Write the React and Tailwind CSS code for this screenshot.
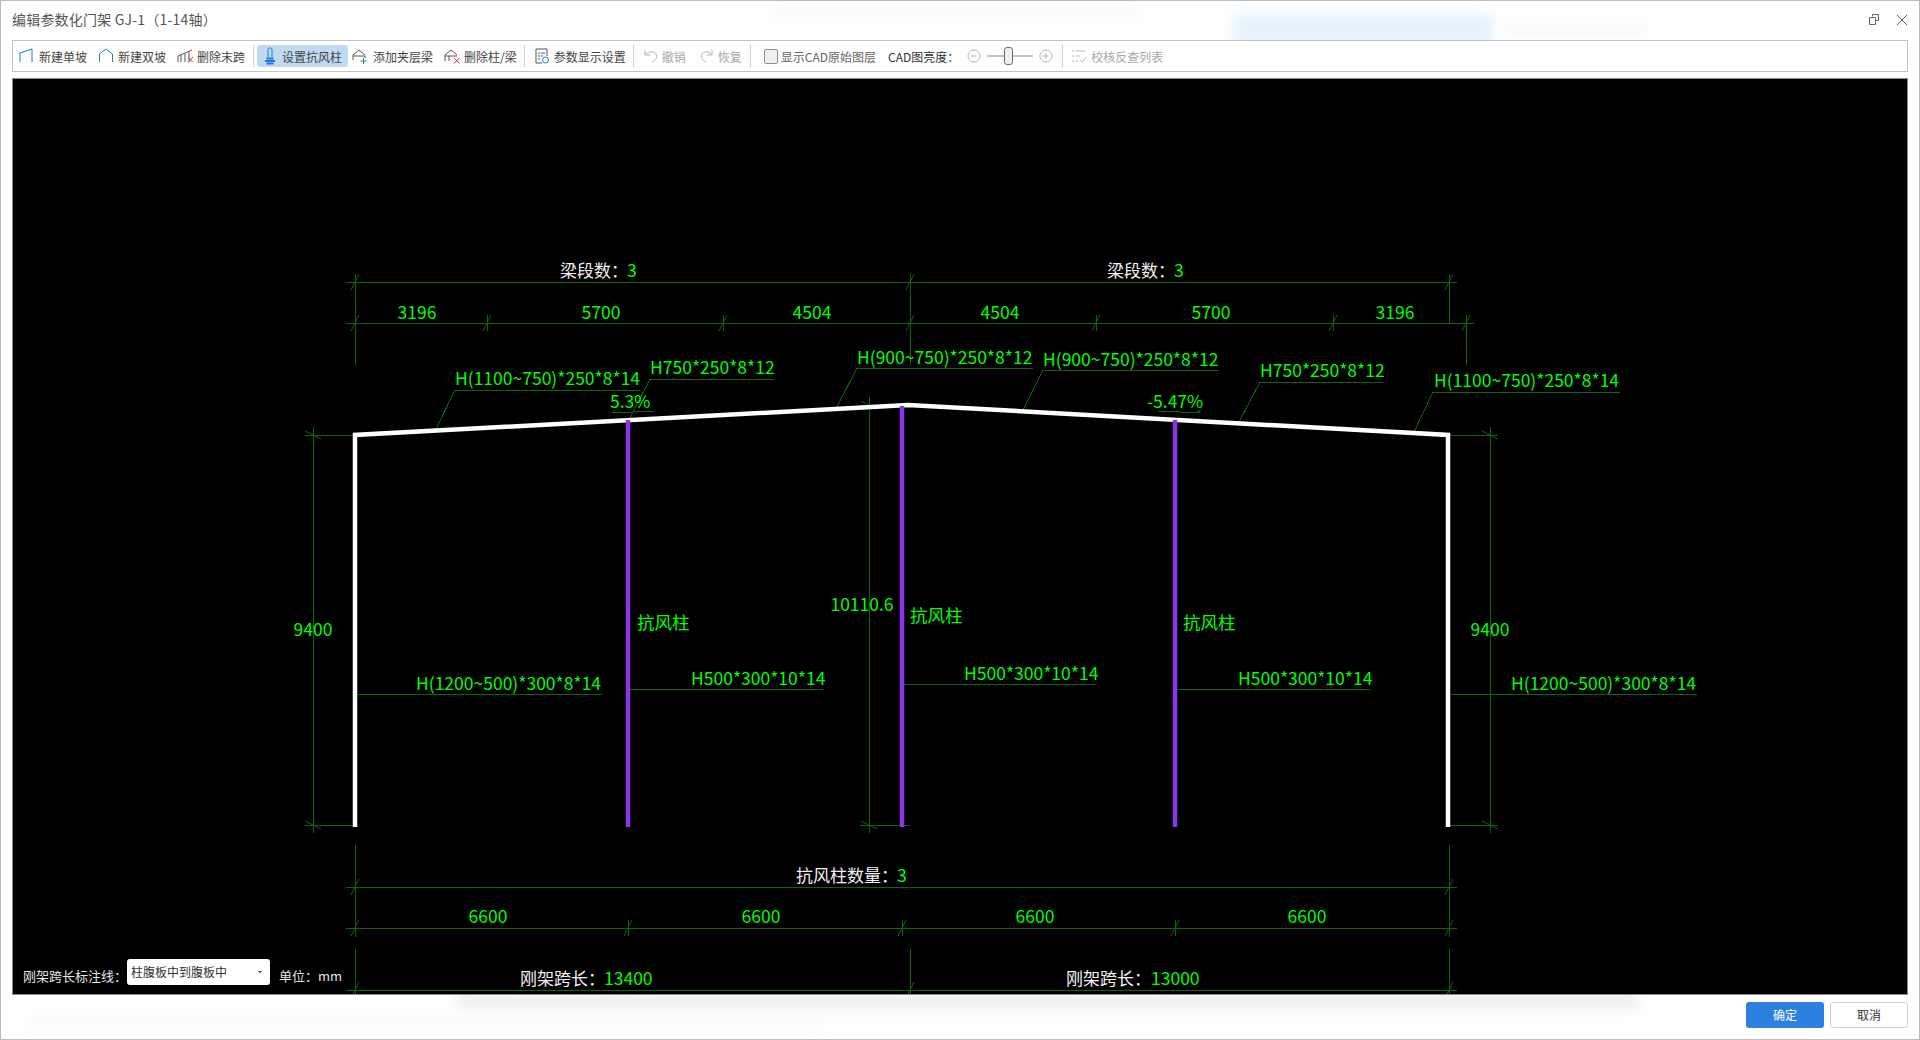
import React from "react";
import { ChevronDown } from "lucide-react";

const DIM = "#0b660b";
const GREEN = "#00ff00";

// 标注线
const dimLines = [
  // 顶部梁段
  [346, 282, 1457, 282], [346, 323, 1474, 323],
  [355, 274, 355, 365], [910, 274, 910, 365], [1449, 274, 1449, 323], [1466, 315, 1466, 365],
  // 左右高度
  [305, 435, 355, 435], [313, 427, 313, 833], [305, 825, 355, 825],
  [1450, 435, 1498, 435], [1490, 427, 1490, 833], [1450, 825, 1498, 825],
  // 中柱高度
  [860, 405, 905, 405], [869, 397, 869, 833], [860, 825, 910, 825],
  // 底部
  [355, 845, 355, 937], [1449, 845, 1449, 937], [346, 887, 1457, 887], [346, 928, 1457, 928],
  [355, 949, 355, 995], [910, 949, 910, 995], [1449, 949, 1449, 995], [346, 990, 1457, 990],
  // 引出线
  [455, 390, 641, 390], [455, 390, 436, 429],
  [650, 379, 774, 379], [650, 379, 630, 418],
  [857, 368, 1033, 368], [857, 368, 837, 407],
  [1043, 370, 1219, 370], [1043, 370, 1023, 410],
  [1260, 382, 1383, 382], [1260, 382, 1239, 422],
  [1433, 392, 1620, 392], [1433, 392, 1414, 432],
  [355, 694, 602, 694], [630, 689, 823, 689], [903, 684, 1097, 684], [1177, 689, 1370, 689], [1451, 694, 1697, 694],
  // 坡度箭头
  [612, 413, 654, 411], [612, 413, 615, 410], [1158, 411, 1201, 413], [1201, 413, 1197, 410],
];

// 斜杠
const slashTicks = [
  [355, 282], [910, 282], [1449, 282],
  [355, 323], [487, 323], [723, 323], [910, 323], [1096, 323], [1333, 323], [1466, 323],
  [355, 887], [1449, 887],
  [355, 928], [628, 928], [902, 928], [1175, 928], [1449, 928],
  [355, 990], [910, 990], [1449, 990],
];

// 反斜杠
const backTicks = [[313, 435], [313, 825], [1490, 435], [1490, 825], [869, 405], [869, 825]];

const texts = [
  ["3196", 417, 319, "middle"], ["5700", 601, 319, "middle"], ["4504", 812, 319, "middle"],
  ["4504", 1000, 319, "middle"], ["5700", 1211, 319, "middle"], ["3196", 1395, 319, "middle"],
  ["3", 627, 277], ["3", 1174, 277], ["3", 897, 882],
  ["H(1100~750)*250*8*14", 455, 385], ["H750*250*8*12", 650, 374],
  ["5.3%", 610, 408], ["H(900~750)*250*8*12", 857, 364], ["H(900~750)*250*8*12", 1043, 366],
  ["H750*250*8*12", 1260, 377], ["-5.47%", 1147, 408], ["H(1100~750)*250*8*14", 1434, 387],
  ["9400", 313, 636, "middle"], ["9400", 1490, 636, "middle"], ["10110.6", 862, 611, "middle"],
  ["抗风柱", 637, 629], ["抗风柱", 910, 622], ["抗风柱", 1183, 629],
  ["H(1200~500)*300*8*14", 416, 690], ["H500*300*10*14", 691, 685], ["H500*300*10*14", 964, 680],
  ["H500*300*10*14", 1238, 685], ["H(1200~500)*300*8*14", 1511, 690],
  ["6600", 488, 923, "middle"], ["6600", 761, 923, "middle"], ["6600", 1035, 923, "middle"], ["6600", 1307, 923, "middle"],
  ["13400", 604, 985], ["13000", 1151, 985],
];

const whiteTexts = [
  ["梁段数：", 560, 277], ["梁段数：", 1107, 277], ["抗风柱数量：", 796, 882],
  ["刚架跨长：", 520, 985], ["刚架跨长：", 1066, 985],
];

function Drawing() {
  return (
    <svg viewBox="13 79 1894 915" className="block w-full h-full" style={{ fontFamily: '"Noto Sans CJK SC", sans-serif' }}>
      <g stroke={DIM} strokeWidth="1" shapeRendering="crispEdges">
        {dimLines.map((l, i) => (
          <line key={i} x1={l[0]} y1={l[1]} x2={l[2]} y2={l[3]} />
        ))}
        {slashTicks.map((t, i) => (
          <line key={i} x1={t[0]} y1={t[1] - 8} x2={t[0]} y2={t[1] + 8} />
        ))}
      </g>
      <g stroke={DIM} strokeWidth="1">
        {slashTicks.map((t, i) => (
          <line key={i} x1={t[0] - 4} y1={t[1] + 8} x2={t[0] + 4} y2={t[1] - 8} />
        ))}
        {backTicks.map((t, i) => (
          <line key={i} x1={t[0] - 8} y1={t[1] - 4} x2={t[0] + 8} y2={t[1] + 4} />
        ))}
      </g>
      <path d="M355 827V435L908 405L1448 435V827" fill="none" stroke="#fff" strokeWidth="4.500" strokeLinejoin="miter" />
      <g stroke="#8a36e6" strokeWidth="4.500">
        <line x1="628" y1="420" x2="628" y2="827" />
        <line x1="902" y1="406" x2="902" y2="827" />
        <line x1="1175" y1="420" x2="1175" y2="827" />
      </g>
      <g fill={GREEN} fontSize="17.5">
        {texts.map((t, i) => (
          <text key={i} x={t[1]} y={t[2]} textAnchor={t[3] || "start"}>{t[0]}</text>
        ))}
      </g>
      <g fill="#f2f2f2" fontSize="17">
        {whiteTexts.map((t, i) => (
          <text key={i} x={t[1]} y={t[2]}>{t[0]}</text>
        ))}
      </g>
    </svg>
  );
}

// 工具栏图标
function Icon({ w = 16, children }) {
  return (
    <svg width={w} height="18" viewBox={`0 0 ${w} 18`} fill="none" strokeWidth="1" className="shrink-0">
      {children}
    </svg>
  );
}

const BLUE = "#1b78dc";
const RED = "#e5383d";
const GRAY = "#555";
const OFF = "#b5b5b5";

function Item({ icon, label, disabled, gap = "gap-[6px]" }) {
  return (
    <div className={`flex items-center h-[22px] ${gap} ${disabled ? "text-[#a8a8a8]" : "text-[#444]"}`}>
      {icon}
      <span className="pt-[2px]">{label}</span>
    </div>
  );
}

function Sep() {
  return <div className="w-px h-[22px] bg-[#d4d4d4] shrink-0" />;
}

function Toolbar() {
  return (
    <div className="h-[32px] flex items-center border border-[#c4c4c4] bg-white pl-[6px] text-[12px] whitespace-nowrap">
      <Item label="新建单坡" icon={<Icon w={14}><path d="M1 15V6L13 2V15" stroke={BLUE} /></Icon>} />
      <div className="w-[11px]" />
      <Item gap="gap-[4px]" label="新建双坡" icon={<Icon w={16}><path d="M1.500 15V7L8 2L14.500 7V15" stroke={BLUE} /></Icon>} />
      <div className="w-[11px]" />
      <Item gap="gap-[3px]" label="删除末跨" icon={<Icon w={17}>
        <path d="M1 15V9L15 3M4 15V8M8 15V6.500M12 15V5" stroke={GRAY} />
        <path d="M11 10L16 15.500M16 10L11 15.500" stroke={RED} />
      </Icon>} />
      <div className="w-[8px]" />
      <Sep />
      <div className="w-[3px]" />
      <div className="w-[91px] h-[22px] bg-[#c0daf3] rounded-[3px] flex items-center pl-[6px] gap-[5px] text-[#444]">
        <Icon w={14}>
          <path d="M5 10V2.500C5 .5 9 .5 9 2.500V10" stroke={BLUE} />
          <path d="M3.500 11.500H10.500M2 14H12M3.500 16.500H10.500" stroke={BLUE} strokeWidth="2" />
        </Icon>
        <span className="pt-[2px]">设置抗风柱</span>
      </div>
      <div className="w-[4px]" />
      <Item gap="gap-[5px]" label="添加夹层梁" icon={<Icon w={16}>
        <path d="M1 8L7 3L13 8M1 8V13M1 9H13M13 9V11" stroke={GRAY} />
        <path d="M11.500 11V17M8.500 14H14.500" stroke={BLUE} />
      </Icon>} />
      <div className="w-[11px]" />
      <Item gap="gap-[3px]" label="删除柱/梁" icon={<Icon w={17}>
        <path d="M1 8L7 3L13 8M1 8V14M1 9H13M5 9V14" stroke={GRAY} />
        <path d="M10 11L15.500 16.500M15.500 11L10 16.500" stroke={RED} />
      </Icon>} />
      <div className="w-[7px]" />
      <Sep />
      <div className="w-[9px]" />
      <Item gap="gap-[5px]" label="参数显示设置" icon={<Icon w={15}>
        <path d="M8 16H2V2H13V9" stroke={GRAY} />
        <path d="M4 6H6M7 6H11M4 9H6M7 9H9M4 12H6" stroke={GRAY} />
        <circle cx="11.500" cy="13" r="3" stroke={BLUE} />
      </Icon>} />
      <div className="w-[7px]" />
      <Sep />
      <div className="w-[10px]" />
      <Item disabled gap="gap-[4px]" label="撤销" icon={<Icon w={14}><path d="M1 3V8H6M1.500 7.500C4 4 11 3.500 12.500 8C13.500 11 11 14 8 15" stroke={OFF} /></Icon>} />
      <div className="w-[14px]" />
      <Item disabled gap="gap-[5px]" label="恢复" icon={<Icon w={13}><path d="M12 3V8H7M11.500 7.500C9 4 3 3.500 1.500 8C.5 11 3 14 6 15" stroke={OFF} /></Icon>} />
      <div className="w-[8px]" />
      <Sep />
      <div className="w-[13px]" />
      <div className="w-[14px] h-[15px] rounded-[2px] border border-[#8f8f8f] bg-[#efefef] shrink-0" />
      <span className="ml-[3px] pt-[2px] text-[#666]">显示CAD原始图层</span>
      <span className="ml-[12px] pt-[2px] text-[#333]">CAD图亮度：</span>
      <div className="ml-[8px]"><Icon w={14}>
        <circle cx="7" cy="9" r="6" stroke={OFF} /><path d="M4 9H10" stroke={OFF} />
      </Icon></div>
      <div className="relative ml-[6px] w-[46px] h-[2px] bg-[#c4c4c4] shrink-0">
        <div className="absolute left-[17px] top-[-8px] w-[9px] h-[18px] rounded-[3px] border border-[#5f6b7a] bg-[#f0f0f0]" />
      </div>
      <div className="ml-[6px]"><Icon w={14}>
        <circle cx="7" cy="9" r="6" stroke={OFF} /><path d="M4 9H10M7 6V12" stroke={OFF} />
      </Icon></div>
      <div className="w-[9px]" />
      <Sep />
      <div className="w-[8px]" />
      <Item disabled gap="gap-[5px]" label="校核反查列表" icon={<Icon w={15}>
        <path d="M1 4H3M5 4H14M1 9H3M5 9H9M1 14H3M5 14H7" stroke={OFF} />
        <path d="M9 13L11 15L15 10" stroke={OFF} />
      </Icon>} />
    </div>
  );
}

export default function App() {
  return (
    <div
      className="relative w-[1920px] h-[1040px] overflow-hidden bg-white border border-[#bdbdbd] flex flex-col px-[11px]"
      style={{ fontFamily: '"Noto Sans CJK SC", "Liberation Sans", sans-serif' }}
    >
      {/* 背后窗口透出来的模糊色块 */}
      <div className="absolute left-[1232px] top-[14px] w-[260px] h-[30px] bg-[#e3f2fc] blur-[6px]" />
      <div className="absolute left-[1505px] top-[24px] w-[140px] h-[10px] bg-[#f8f8f8] blur-[5px]" />
      <div className="absolute left-[770px] top-[6px] w-[370px] h-[10px] bg-[#fafafa] blur-[5px]" />
      <div className="absolute left-[456px] top-[992px] w-[1180px] h-[16px] bg-[#eeeeee] blur-[6px]" />
      <div className="absolute left-[30px] top-[1014px] w-[790px] h-[14px] bg-[#fafafa] blur-[6px]" />

      <div className="relative h-[39px] pb-[2px] flex items-center justify-between shrink-0">
        <span className="text-[14px] tracking-[0.2px] text-[#555]">编辑参数化门架 GJ-1（1-14轴）</span>
        <div className="flex items-center gap-[17px]">
          <svg width="10" height="11" viewBox="0 0 10 11" fill="none" stroke="#666">
            <path d="M3.500 2.500V.5H9.500V6.500H6.500" />
            <path d="M.5 3.500H6.500V10.500H.5Z" />
          </svg>
          <svg width="12" height="12" viewBox="0 0 12 12" fill="none" stroke="#666">
            <path d="M1 1L11 11M11 1L1 11" />
          </svg>
        </div>
      </div>

      <div className="relative shrink-0"><Toolbar /></div>

      <div className="relative mt-[6px] h-[917px] shrink-0 border border-[#8a8a8a] bg-black overflow-hidden">
        <Drawing />
        <div className="absolute left-[10px] bottom-[9px] flex items-start text-[#e6e6e6] whitespace-nowrap">
          <span className="pt-[7px] text-[13px]">刚架跨长标注线：</span>
          <div className="w-[143px] h-[26px] bg-white rounded-[3px] flex items-center justify-between pl-[4px] pr-[6px] text-[12px] text-[#333]">
            <span>柱腹板中到腹板中</span>
            <ChevronDown size={8} fill="#555" stroke="#555" />
          </div>
          <span className="ml-[9px] pt-[7px] text-[13px]">单位：mm</span>
        </div>
      </div>

      <div className="relative flex justify-end gap-[6px] mt-[7px] text-[12px] shrink-0">
        <button className="w-[78px] h-[26px] rounded-[3px] bg-[#2e80e0] text-white">确定</button>
        <button className="w-[78px] h-[26px] rounded-[3px] border border-[#cfcfcf] bg-white text-[#333]">取消</button>
      </div>
    </div>
  );
}
